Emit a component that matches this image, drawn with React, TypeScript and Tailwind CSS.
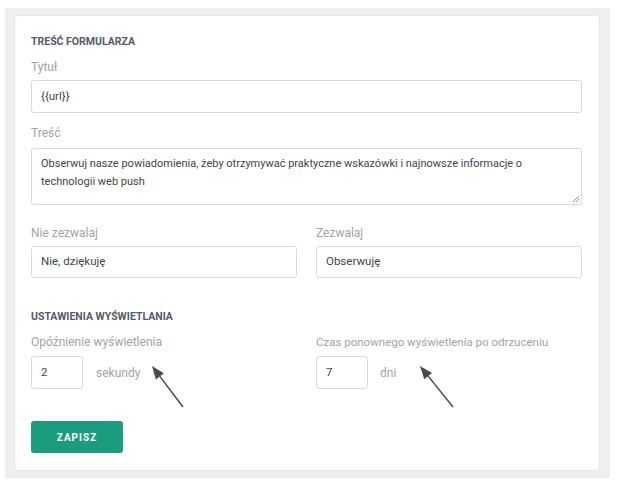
import React from "react";

function Label({ children }: { children: React.ReactNode }) {
  return <div className="text-[12px] leading-4 text-[#a0a3aa]">{children}</div>;
}

function Arrow({ x1, y1, x2, y2 }: { x1: number; y1: number; x2: number; y2: number }) {
  const a = Math.atan2(y2 - y1, x2 - x1);
  const len = 13;
  const w = 5;
  const bx = x2 - len * Math.cos(a);
  const by = y2 - len * Math.sin(a);
  const p1 = `${bx + w * Math.sin(a)},${by - w * Math.cos(a)}`;
  const p2 = `${bx - w * Math.sin(a)},${by + w * Math.cos(a)}`;
  return (
    <g>
      <line x1={x1} y1={y1} x2={bx} y2={by} stroke="#4a4a4a" strokeWidth="1.5" />
      <polygon points={`${x2},${y2} ${p1} ${p2}`} fill="#4a4a4a" />
    </g>
  );
}

export default function App() {
  return (
    <div
      className="relative w-[617px] h-[485px] bg-white"
      style={{ fontFamily: "Roboto, 'Noto Sans', sans-serif" }}
    >
      <div className="ml-[5px] mt-[8px] w-[605px] h-[470px] bg-[#efeff3] pl-[9px] pr-[10px] pt-[7px] pb-[7px]">
        <div className="h-full rounded-[4px] border border-[#e6e6ea] bg-white pl-[16px] pr-[17px] pt-[19px]">
          <div className="text-[10.5px] leading-[14px] font-bold uppercase text-[#555a66]">Treść formularza</div>

          <div className="mt-[10px]">
            <Label>Tytuł</Label>
          </div>
          <div className="mt-[5px] h-[33px] rounded-[3px] border border-[#dadada] px-[9px] flex items-center text-[11.5px] text-[#444]">
            {"{{url}}"}
          </div>

          <div className="mt-[12px]">
            <Label>Treść</Label>
          </div>
          <div className="relative mt-[7px] h-[57px] rounded-[3px] border border-[#dadada] px-[9px] pt-[6px] text-[11px] leading-[18px] text-[#444]">
            Obserwuj nasze powiadomienia, żeby otrzymywać praktyczne wskazówki i najnowsze informacje o technologii web push
            <svg className="absolute right-[1px] bottom-[1px]" width="8" height="8" viewBox="0 0 8 8">
              <line x1="7" y1="1" x2="1" y2="7" stroke="#999" strokeWidth="1" />
              <line x1="7" y1="4" x2="4" y2="7" stroke="#999" strokeWidth="1" />
            </svg>
          </div>

          <div className="mt-[20px] grid grid-cols-2 gap-x-[19px]">
            <div>
              <Label>Nie zezwalaj</Label>
              <div className="mt-[5px] h-[32px] rounded-[3px] border border-[#dadada] px-[9px] flex items-center text-[11.5px] text-[#444]">
                Nie, dziękuję
              </div>
            </div>
            <div>
              <Label>Zezwalaj</Label>
              <div className="mt-[5px] h-[32px] rounded-[3px] border border-[#dadada] px-[9px] flex items-center text-[11.5px] text-[#444]">
                Obserwuję
              </div>
            </div>
          </div>

          <div className="mt-[32px] text-[10.5px] leading-[14px] font-bold uppercase text-[#555a66]">
            Ustawienia wyświetlania
          </div>

          <div className="mt-[10px] grid grid-cols-2 gap-x-[19px]">
            <div>
              <Label>Opóźnienie wyświetlenia</Label>
              <div className="mt-[6px] flex items-center">
                <div className="w-[52px] h-[33px] rounded-[3px] border border-[#dadada] px-[9px] flex items-center text-[11.5px] text-[#444]">
                  2
                </div>
                <span className="ml-[13px] text-[12px] text-[#a0a3aa]">sekundy</span>
              </div>
            </div>
            <div>
              <div className="text-[11.5px] leading-4 text-[#a0a3aa]">Czas ponownego wyświetlenia po odrzuceniu</div>
              <div className="mt-[6px] flex items-center">
                <div className="w-[52px] h-[33px] rounded-[3px] border border-[#dadada] px-[9px] flex items-center text-[11.5px] text-[#444]">
                  7
                </div>
                <span className="ml-[12px] text-[12px] text-[#a0a3aa]">dni</span>
              </div>
            </div>
          </div>

          <button className="mt-[32px] w-[92px] h-[32px] rounded-[3px] bg-[#1b9c7f] text-white text-[10px] font-bold tracking-[1px] uppercase">
            Zapisz
          </button>
        </div>
      </div>

      <svg className="absolute left-0 top-0 pointer-events-none" width="617" height="485">
        <Arrow x1={183} y1={399} x2={152} y2={358} />
        <Arrow x1={453} y1={399} x2={420} y2={358} />
      </svg>
    </div>
  );
}
